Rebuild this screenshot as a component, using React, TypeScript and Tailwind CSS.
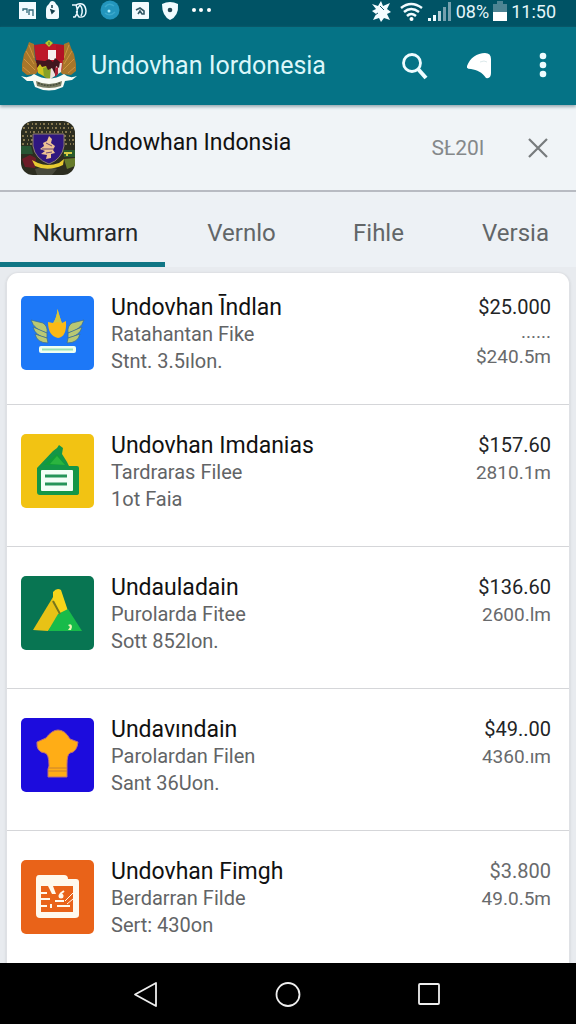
import type { ReactNode } from "react";

type Entry = {
  title: string;
  file: string;
  detail: string;
  price: string;
  dots?: boolean;
  size: string;
  mutedPrice?: boolean;
  art: ReactNode;
};

const WingedFlame = () => (
  <svg viewBox="0 0 73 74" className="block h-full w-full bg-[#1d78f7]" aria-hidden="true">
    <g fill="#b9c873" stroke="#3a6f95" strokeWidth="0.8">
      <path d="M10 24 L22 27 Q27 30 26 37 Q13 34 10 24Z" />
      <path d="M12 31 L26 37 V42 Q14 40 12 31Z" />
      <path d="M14 38 L26 42 L27 47 Q16 47 14 38Z" />
      <path d="M63 24 L51 27 Q46 30 47 37 Q60 34 63 24Z" />
      <path d="M61 31 L47 37 V42 Q59 40 61 31Z" />
      <path d="M59 38 L47 42 L46 47 Q57 47 59 38Z" />
    </g>
    <path d="M36.500 13 Q39 22 41 27 L45 25 Q46 41 37 42 Q27 40 27 26 L32 27 Q36 21 36.500 13Z" fill="#fbb916" />
    <path d="M36.500 13 Q39 22 41 28 Q36 24 32 28 Q36 21 36.500 13Z" fill="#d4c63e" />
    <rect x="18" y="50" width="37" height="7" rx="2" fill="#effff1" />
    <path d="M21 53.500H52" stroke="#9be1b5" strokeWidth="2" />
  </svg>
);

const GreenNote = () => (
  <svg viewBox="0 0 73 74" className="block h-full w-full bg-[#f2c313]" aria-hidden="true">
    <path d="M16 34 L32 17 L36 14 L38 11 L42 14 L41 20 L46 28 L48 32 H56 Q58 32 58 34 V59 Q58 61 55 61 H19 Q16 61 16 58Z" fill="#149647" />
    <path d="M23 31 L36 20 L45 31Z" fill="#119d36" />
    <path d="M29 30 L36 22 L44 31Z" fill="#2bb43f" />
    <rect x="20" y="36" width="32" height="21" rx="1" fill="#f2fff6" />
    <path d="M24 42H46M24 50H46" stroke="#249558" strokeWidth="3" />
  </svg>
);

const Peak = () => (
  <svg viewBox="0 0 73 74" className="block h-full w-full bg-[#087552]" aria-hidden="true">
    <path d="M12 54 L32 21 L40 38 L27 55Z" fill="#e8c216" />
    <path d="M32 16 Q36 11 40 14 L47 35 L38 40 L32 26Z" fill="#f6d51a" />
    <path d="M47 33 L61 55 H27 L37 38Z" fill="#18bb4a" />
    <path d="M32 25 L39 38" stroke="#75751d" strokeWidth="2" />
    <path d="M47 49 Q51 47 51 51 L50 54 H47 L49 51Z" fill="#e9f5b1" />
  </svg>
);

const GoldCap = () => (
  <svg viewBox="0 0 73 74" className="block h-full w-full bg-[#1c0cdd]" aria-hidden="true">
    <path d="M16 24 L25 20 Q31 12 37 12 Q44 12 49 21 L57 24 Q56 34 49 35 Q46 36 46 47 V59 H27 V51 L28 48 Q28 36 24 35 Q15 34 16 24Z" fill="#ffad16" stroke="#b76d7f" strokeWidth="1" />
    <path d="M28 50H46M27 53H46" stroke="#c88230" strokeWidth="1" />
  </svg>
);

const OrangeDocument = () => (
  <svg viewBox="0 0 73 74" className="block h-full w-full bg-[#e96319]" aria-hidden="true">
    <path d="M18 15 H43 Q47 15 47 19 H55 Q58 19 58 22 V55 Q58 58 54 58 H19 Q15 58 15 54 V19 Q15 15 18 15Z" fill="#fff9ed" />
    <path d="M20 26H52V52H20Z" fill="#e96319" />
    <path d="M27 26H32L35 34H31Z" fill="#fff9ed" />
    <path d="M20 33H26M20 39H29M20 46H26M30 44V48M34 41H43M36 46H49M39 34L43 31" fill="none" stroke="#fff9ed" strokeWidth="2" />
    <path d="M52 33L44 41M52 39L46 44" stroke="#fff9ed" strokeWidth="1" />
    <circle cx="40" cy="36" r="2.500" fill="#fff9ed" />
  </svg>
);

const entries: Entry[] = [
  { title: "Undovhan Īndlan", file: "Ratahantan Fike", detail: "Stnt. 3.5ılon.", price: "$25.000", dots: true, size: "$240.5m", art: <WingedFlame /> },
  { title: "Undovhan Imdanias", file: "Tardraras Filee", detail: "1ot Faia", price: "$157.60", size: "2810.1m", art: <GreenNote /> },
  { title: "Undauladain", file: "Purolarda Fitee", detail: "Sott 852lon.", price: "$136.60", size: "2600.lm", art: <Peak /> },
  { title: "Undavındain", file: "Parolardan Filen", detail: "Sant 36Uon.", price: "$49..00", size: "4360.ım", art: <GoldCap /> },
  { title: "Undovhan Fimgh", file: "Berdarran Filde", detail: "Sert: 430on", price: "$3.800", size: "49.0.5m", mutedPrice: true, art: <OrangeDocument /> },
];

const StatusBar = () => (
  <div className="flex h-[27px] items-start justify-between bg-[#005365] pr-5 pl-[19px] text-white">
    <svg viewBox="0 0 200 24" className="h-6 w-[200px] shrink-0" aria-hidden="true">
      <path d="M0 2H17V19H0Z" fill="#f2fbff" />
      <path d="M4 11V9H8V13M10 15V10H14V16" fill="none" stroke="#31697a" strokeWidth="1.300" />
      <path d="M30 4Q31 1 33 1Q36 1 37 4Q40 6 40 11V17Q40 19 37 19H29Q27 19 27 16V10Q27 6 30 4Z" fill="#f2fbff" />
      <path d="M33 5V8M32 10L35 11L33 13Z" fill="#123e4c" stroke="#123e4c" strokeWidth="1.500" />
      <path d="M53 5H57Q60 12 56 17H54M57 5Q66 1 67 11Q67 18 60 17Q55 12 61 5M61 5Q65 10 62 16" fill="none" stroke="#eaf8ff" strokeWidth="1.500" />
      <circle cx="91" cy="10" r="9.500" fill="#2396bd" />
      <path d="M86 7Q90 2 95 6M86 13Q91 17 96 12" fill="none" stroke="#3ba9cb" strokeWidth="1.500" />
      <circle cx="90" cy="11" r="1.500" fill="#b1f1ff" />
      <rect x="113" y="2" width="17" height="17" rx="1" fill="#f2fbff" />
      <path d="M117 10L121 8L125 11V14H123L121 11L119 14" fill="none" stroke="#315866" strokeWidth="1.600" />
      <path d="M143 4Q151 0 159 4Q160 16 151 20Q143 16 143 4Z" fill="#f2fbff" />
      <circle cx="151" cy="10" r="2.300" fill="#244653" />
      <circle cx="175" cy="10" r="2" fill="white" /><circle cx="182" cy="10" r="2" fill="white" /><circle cx="190" cy="10" r="2" fill="white" />
    </svg>
    <div className="flex h-6 items-center gap-1 text-[18px] leading-6 text-[#e5f6fa]">
      <svg viewBox="0 0 80 22" className="h-[22px] w-20" aria-hidden="true">
        <path d="M0 3L6 5L9 0L11 5L18 2L15 8L19 11L15 13L18 19L12 17L9 21L7 17L1 19L4 13L0 10L4 8Z" fill="#f4fcff" />
        <path d="M8 5L12 9M3 14L6 12" stroke="#18586a" strokeWidth="1" fill="none" />
        <path d="M29 7Q39 -1 50 7M32 11Q39 5 47 11M35 15Q39 11 44 15" fill="none" stroke="#f1fcff" strokeWidth="2.500" />
        <circle cx="39.500" cy="18" r="2" fill="white" />
        <path d="M56 20V17H59V20M61 20V14H64V20" fill="#f1fcff" />
        <path d="M66 20V10H69V20" fill="#b1ccd5" />
        <path d="M71 20V6H74V20M76 20V1H79V20" fill="#74a0ae" />
      </svg>
      <span>08%</span>
      <svg viewBox="0 0 14 22" className="h-[22px] w-3.5" aria-hidden="true">
        <path d="M0 3H4V0H10V3H14V11H0Z" fill="#4e8493" /><path d="M0 11H14V20H0Z" fill="white" />
      </svg>
      <span>11:50</span>
    </div>
  </div>
);

const Garuda = () => (
  <svg viewBox="0 0 56 52" className="h-[52px] w-14 shrink-0" aria-label="Garuda emblem" role="img">
    <path d="M13 4L8 2L6 8L3 14L1 24L1 31L6 35L15 34L19 28L14 20Z" fill="#a8762a" />
    <path d="M43 4L48 2L50 8L53 14L55 24L55 31L50 35L41 34L37 28L42 20Z" fill="#a8762a" />
    <path d="M8 5L13 18M5 11L13 24M3 19L14 30M2 27L9 33M48 5L43 18M51 11L43 24M53 19L42 30M54 27L47 33" stroke="#cf9440" strokeWidth="1" />
    <path d="M13 5Q28 2 43 5L41 30L28 40L16 31Z" fill="#bd1829" />
    <path d="M27 10H35V20H27Z" fill="#f6eeee" />
    <path d="M35 5H43V20H35Z" fill="#b31225" />
    <path d="M15 23H28V39L17 33Z" fill="#d0c51f" />
    <path d="M28 23H41L40 32L28 40Z" fill="#ece0dc" />
    <path d="M22 28L30 26L29 39L23 37Z" fill="#86a126" />
    <path d="M15 20L24 21L28 19L32 22L34 18L39 22L38 28L35 26L34 34L31 28L27 30L25 26L21 27L19 24L16 28Z" fill="#42161e" />
    <path d="M34 28L37 27L37 34L34 37Z" fill="#a92034" />
    <path d="M28 0L32 3L28 7L24 3Z" fill="#b5c82c" />
    <path d="M28 2V5" stroke="#5d6d22" strokeWidth="1" />
    <path d="M0 36Q8 39 13 34Q28 43 43 34Q48 39 56 36L51 40L44 41L42 47Q28 54 14 47L12 41L6 41Z" fill="#f8fbf4" />
    <path d="M15 41Q28 47 41 41L40 46Q28 50 16 46Z" fill="#777c61" />
    <path d="M17 43Q28 48 39 43" fill="none" stroke="#454d3c" strokeDasharray="2 1" strokeWidth="1.500" />
  </svg>
);

const Badge = () => (
  <svg viewBox="0 0 54 54" className="h-[54px] w-[54px] shrink-0 rounded-[12px]" aria-label="Indonesia badge" role="img">
    <rect width="54" height="54" fill="#2c2d20" />
    <path d="M6 3H50M2 7H52M4 11H51M1 15H12M43 15H54M2 19H12M43 19H54M1 23H12M44 23H53" stroke="#85774f" strokeWidth="2" strokeDasharray="2 3 1 2" />
    <path d="M0 25H10L12 33H0Z" fill="#285534" /><path d="M1 38L9 34L15 37L14 47L4 46Z" fill="#6c1c28" />
    <path d="M42 29H54V36H43Z" fill="#285a2c" /><path d="M43 38L54 37V45L46 48Z" fill="#667b2b" />
    <path d="M14 48L24 45L36 48L31 54H16Z" fill="#48493b" />
    <path d="M12 13H43V25Q41 38 28 43Q14 38 12 25Z" fill="#2f1780" stroke="#8c7d72" strokeWidth="1" />
    <path d="M28 15L31 18L30 22L34 25L32 29L34 32L30 33L30 37L25 38L26 34L20 33L24 30L19 28L23 25L22 22L26 20Z" fill="#edc293" />
    <path d="M25 22L31 25M21 28L33 28M25 32L31 31" stroke="#654575" strokeWidth="1" />
    <path d="M11 39L17 42Q27 46 38 42L43 38L42 44Q27 51 14 45Z" fill="#e8ca31" />
    <path d="M43 32H46V35M47 32H51" fill="none" stroke="#d4cb43" strokeWidth="2" />
  </svg>
);

const tabs = [
  { name: "Nkumrarn", style: "w-[165px] border-b-[5px] border-[#107685] pl-1.5 text-[#24282b]" },
  { name: "Vernlo", style: "flex-1 pb-[5px] pl-4" },
  { name: "Fihle", style: "flex-1 pb-[5px] pl-4" },
  { name: "Versia", style: "flex-1 pb-[5px] pl-4" },
];

export default function App() {
  return (
    <div className="flex min-h-screen flex-col bg-[#e8ebef] font-[Roboto,'Liberation_Sans',sans-serif] text-[#111]">
      <StatusBar />
      <header className="relative flex h-[78px] items-center bg-[#057386] pr-[23px] pl-[21px] shadow-[0_2px_3px_#9aabb2]">
        <Garuda />
        <h1 className="ml-3.5 flex-1 text-[25px] leading-8 whitespace-nowrap text-[#dbf7fa]">Undovhan Iordonesia</h1>
        <div className="flex items-center gap-[38px] text-white">
          <button type="button" aria-label="Search" className="h-7 w-7">
            <svg viewBox="0 0 28 28"><circle cx="11" cy="11" r="8.500" fill="none" stroke="#effcff" strokeWidth="2.800" /><path d="M17 17L25 26" stroke="#effcff" strokeWidth="4" /></svg>
          </button>
          <button type="button" aria-label="Notifications" className="h-7 w-7">
            <svg viewBox="0 0 28 28"><path d="M0 14C3 6 10 1 18 1Q24 1 24 7V21Q24 27 19 26C15 20 10 18 4 17Q-1 17 0 14Z" fill="white" /><path d="M13 10L17 9L20 10" fill="none" stroke="#dce9eb" /></svg>
          </button>
          <button type="button" aria-label="More options" className="h-7 w-5">
            <svg viewBox="0 0 20 28"><circle cx="10" cy="4" r="3.300" fill="#effcff" /><circle cx="10" cy="13" r="3.300" fill="#effcff" /><circle cx="10" cy="22" r="3.300" fill="#effcff" /></svg>
          </button>
        </div>
      </header>
      <section className="flex h-[87px] items-center border-b-2 border-[#b8bbc2] bg-[#f0f4f7] pr-6 pl-[21px]">
        <Badge />
        <h2 className="mb-2.5 ml-3.5 flex-1 text-[23px] leading-7">Undowhan Indonsia</h2>
        <span className="text-[21px] leading-7 text-[#85888a]">SŁ20l</span>
        <button type="button" aria-label="Close" className="ml-10 h-7 w-7">
          <svg viewBox="0 0 28 28"><path d="M5 5L23 23M23 5L5 23" stroke="#777b7d" strokeWidth="2.200" /></svg>
        </button>
      </section>
      <nav aria-label="Sections" className="flex h-[75px] bg-[#edf1f5] text-[24px] text-[#626668]">
        {tabs.map((tab, index) => (
          <a key={tab.name} href="#" aria-current={index === 0 ? "page" : undefined} className={`flex items-center justify-center pt-3 ${tab.style}`}>{tab.name}</a>
        ))}
      </nav>
      <main className="px-1.5 pt-[5px]">
        <ul className="divide-y divide-[#d5d6d9] overflow-hidden rounded-t-xl border-x border-t border-[#dfe1e5] bg-white shadow-sm">
          {entries.map((entry, index) => (
            <li key={entry.title} className={`flex items-start pr-[18px] pl-3.5 ${index === 0 ? "pt-[21px] pb-[29px]" : index === 4 ? "pt-[27px] pb-6" : "pt-[27px] pb-[33px]"}`}>
              <div className="mt-0.5 h-[74px] w-[73px] shrink-0 overflow-hidden rounded-[5px]">{entry.art}</div>
              <div className="ml-[17px] min-w-0 flex-1 text-[20px] leading-[27px] text-[#626466]">
                <h3 className="text-[23px] leading-[27px] text-[#111]">{entry.title}</h3>
                <p>{entry.file}</p>
                <p>{entry.detail}</p>
              </div>
              <div className="text-right text-[19px] leading-[27px] text-[#686a6c]">
                <p className={`text-[20px] leading-[27px] ${entry.mutedPrice ? "" : "text-[#222426]"}`}>{entry.price}</p>
                {entry.dots && <p className="leading-[22px]">......</p>}
                <p>{entry.size}</p>
              </div>
            </li>
          ))}
        </ul>
      </main>
      <nav aria-label="Device navigation" className="mt-auto flex h-[61px] shrink-0 items-center justify-center gap-[113px] bg-black text-white">
        <button type="button" aria-label="Back" className="h-7 w-7"><svg viewBox="0 0 28 28"><path d="M23 3V26L2 14.500Z" fill="none" stroke="#eee" strokeWidth="1.800" strokeLinejoin="round" /></svg></button>
        <button type="button" aria-label="Home" className="h-7 w-7"><svg viewBox="0 0 28 28"><circle cx="14" cy="14.500" r="11.500" fill="none" stroke="#eee" strokeWidth="1.800" /></svg></button>
        <button type="button" aria-label="Recent apps" className="h-7 w-7"><svg viewBox="0 0 28 28"><rect x="4" y="4" width="20" height="20" rx="1" fill="none" stroke="#eee" strokeWidth="1.800" /></svg></button>
      </nav>
    </div>
  );
}
